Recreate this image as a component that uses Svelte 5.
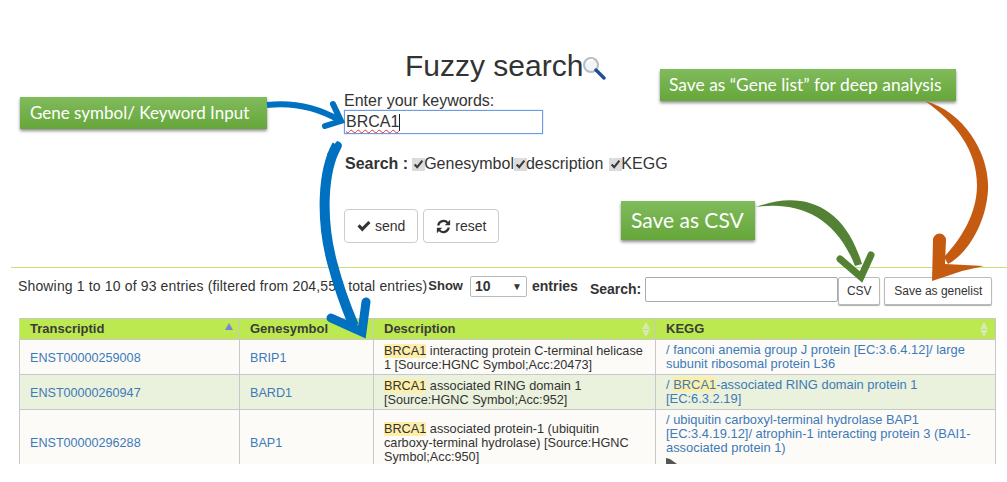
<script>
  const rows = [
    {
      id: 'ENST00000259008',
      gene: 'BRIP1',
      desc: ' interacting protein C-terminal helicase 1 [Source:HGNC Symbol;Acc:20473]',
      kegg: ['/ fanconi anemia group J protein [EC:3.6.4.12]/ large subunit ribosomal protein L36']
    },
    {
      id: 'ENST00000260947',
      gene: 'BARD1',
      desc: ' associated RING domain 1 [Source:HGNC Symbol;Acc:952]',
      kegg: ['/ ', 'BRCA1', '-associated RING domain protein 1 [EC:6.3.2.19]']
    },
    {
      id: 'ENST00000296288',
      gene: 'BAP1',
      desc: ' associated protein-1 (ubiquitin carboxy-terminal hydrolase) [Source:HGNC Symbol;Acc:950]',
      kegg: ['/ ubiquitin carboxyl-terminal hydrolase BAP1 [EC:3.4.19.12]/ atrophin-1 interacting protein 3 (BAI1-associated protein 1)'],
      more: true
    }
  ];
  const fields = ['Genesymbol', 'description', 'KEGG'];
</script>

<div class="page">
  <h1 class="title">Fuzzy search<svg class="glass" viewBox="0 0 24 24" width="24" height="24">
      <circle cx="9" cy="9" r="7" fill="#f2f5f7" stroke="#b4bdc2" stroke-width="2" />
      <path d="M5 7a5 5 0 0 1 6-3" fill="none" stroke="#fff" stroke-width="2" />
      <path d="M14 14l8 8" stroke="#1f4f96" stroke-width="3.4" stroke-linecap="round" />
    </svg></h1>

  <form class="form">
    <div class="kw-label">Enter your keywords:</div>
    <div class="kw-input"><span class="squiggle">BRCA1</span><span class="caret"></span></div>

    <div class="fields">
      <b>Search :</b>
      {#each fields as f}
        <label><input type="checkbox" checked />{f}</label>
      {/each}
    </div>

    <div class="actions">
      <button type="button" class="btn">
        <svg viewBox="0 0 14 12" width="14" height="12"><path d="M0.5 6.5l2.2-2.2 2.6 2.6 6-6 2.2 2.2-8.2 8.4z" fill="#333" /></svg>
        send
      </button>
      <button type="button" class="btn">
        <svg viewBox="0 0 14 14" width="15" height="15" fill="none" stroke="#333" stroke-width="2">
          <path d="M2 6a5.2 5.2 0 0 1 9-2.4" />
          <path d="M12 8a5.2 5.2 0 0 1-9 2.4" />
          <path d="M13.2 0.8v5h-5z" fill="#333" stroke="none" />
          <path d="M0.8 13.2v-5h5z" fill="#333" stroke="none" />
        </svg>
        reset
      </button>
    </div>
  </form>

  <div class="results">
    <div class="toolbar">
      <span class="info">Showing 1 to 10 of 93 entries (filtered from 204,555 total entries)</span>
      <b class="show">Show</b>
      <span class="select">10<i>▼</i></span>
      <b class="entries">entries</b>
      <b class="search-label">Search:</b>
      <input class="search" type="text" />
      <button type="button" class="tool-btn">CSV</button>
      <button type="button" class="tool-btn save">Save as genelist</button>
    </div>

    <table>
      <colgroup>
        <col style="width:220px" />
        <col style="width:134px" />
        <col style="width:282px" />
        <col />
      </colgroup>
      <thead>
        <tr>
          <th>Transcriptid<span class="sort-up"></span></th>
          <th>Genesymbol</th>
          <th>Description<span class="sort"></span></th>
          <th>KEGG<span class="sort"></span></th>
        </tr>
      </thead>
      <tbody>
        {#each rows as r, i}
          <tr class:alt={i % 2 == 1}>
            <td><a href="#top">{r.id}</a></td>
            <td><a href="#top">{r.gene}</a></td>
            <td class="desc"><mark>BRCA1</mark>{r.desc}</td>
            <td class="kegg">
              <a href="#top">
                {#each r.kegg as part}
                  {#if part == 'BRCA1'}<mark>{part}</mark>{:else}{part}{/if}
                {/each}
              </a>
              {#if r.more}
                <svg class="more" viewBox="0 0 12 13" width="12" height="13"><path d="M0 0l4 1 7 5v2H0z" fill="#555" /></svg>
              {/if}
            </td>
          </tr>
        {/each}
      </tbody>
    </table>
  </div>

  <!-- annotations drawn over the screenshot -->
  <div class="note note-input">Gene symbol/ Keyword Input</div>
  <div class="note note-list">Save as “Gene list” for deep analysis</div>
  <div class="note note-csv">Save as CSV</div>

  <svg class="arrows" viewBox="0 0 1007 464" width="1007" height="464">
    <g fill="none" stroke="#0070c0" stroke-linecap="round">
      <path d="M267 105C295 102 318 108 339 120" stroke-width="6" stroke-linecap="butt" />
      <path d="M333 104L341 121L325 126" stroke-width="6" />
      <path d="M337 145C322 172 321 220 332 262C338 285 345 305 354 326" stroke-width="10" stroke-linecap="butt" />
      <path d="M331 318L362 332L366 302" stroke-width="9" />
    </g>
    <path d="M337 141q5 1 5 5l-6 12-9-4z" fill="#0070c0" />

    <path d="M925 101C965 112 990 155 988 190C986 225 966 255 948 264L944 257C960 240 977 215 977 185C977 150 955 122 925 101Z" fill="#c55a11" />
    <path d="M932 281L933 240a6.500 6.500 0 0 1 13 0L945 264L984 266L962 271Z" fill="#c55a11" />

    <path d="M756 207C795 192 842 198 862 264L855 266C835 214 795 201 756 207Z" fill="#548235" />
    <path d="M840 259L861 277L871 255" fill="none" stroke="#548235" stroke-width="7" stroke-linecap="round" />
  </svg>
</div>

<style>
  :global(body) {
    margin: 0;
    background: #fff;
  }

  .page {
    position: relative;
    height: 464px;
    overflow: hidden;
    font-family: "Liberation Sans", Arial, sans-serif;
    color: #333;
  }

  .title {
    display: flex;
    align-items: flex-end;
    height: 85px;
    margin: 0;
    padding-left: 405px;
    box-sizing: border-box;
    font-size: 30px;
    font-weight: 400;
    line-height: 38px;
  }

  .glass {
    margin-left: -1px;
    margin-bottom: 5px;
  }

  .form {
    margin: 0 0 0 344px;
    padding-top: 6px;
  }

  .kw-label {
    font-size: 16px;
    line-height: 19px;
  }

  .kw-input {
    display: flex;
    align-items: center;
    box-sizing: border-box;
    width: 199px;
    height: 24px;
    border: 1px solid #6d9be6;
    box-shadow: 0 0 1px #7da7e8;
    font-size: 16px;
    padding-left: 1px;
  }

  .squiggle {
    text-decoration: underline wavy #e03030 1px;
    text-underline-offset: 2px;
  }

  .caret {
    width: 1px;
    height: 17px;
    background: #222;
  }

  .fields {
    display: flex;
    align-items: center;
    height: 20px;
    margin-top: 20px;
    padding-left: 1px;
    font-size: 16px;
  }

  .fields b {
    margin-right: 4px;
  }

  .fields label {
    display: flex;
    align-items: center;
  }

  .fields label:last-child {
    margin-left: 6px;
  }

  .fields input {
    width: 13px;
    height: 13px;
    margin: 0 -1px 0 0;
    accent-color: #dcdcdc;
  }

  .actions {
    display: flex;
    gap: 5px;
    margin-top: 35px;
  }

  .btn {
    display: flex;
    align-items: center;
    justify-content: center;
    gap: 4px;
    height: 34px;
    padding: 0 12px;
    background: #fff;
    border: 1px solid #ccc;
    border-radius: 4px;
    color: #333;
    font: 14px "Liberation Sans", Arial, sans-serif;
  }

  .results {
    margin: 24px 0 0 11px;
    border-top: 1px solid #c5e375;
  }

  .toolbar {
    display: flex;
    align-items: flex-start;
    height: 50px;
    padding-left: 7px;
    font-size: 14px;
    color: #333;
  }

  .info {
    margin-top: 10px;
    letter-spacing: 0.150px;
  }

  .show {
    margin: 10px 7px 0 1px;
    font-size: 13px;
  }

  .select {
    position: relative;
    box-sizing: border-box;
    width: 57px;
    height: 21px;
    margin-top: 8px;
    padding-left: 4px;
    border: 1px solid #bbb;
    border-radius: 2px;
    font-weight: 700;
    font-size: 14px;
    line-height: 19px;
  }

  .select i {
    position: absolute;
    right: 4px;
    top: 0;
    font-style: normal;
    font-size: 10px;
  }

  .entries {
    margin: 10px 0 0 5px;
    font-size: 14px;
  }

  .search-label {
    margin: 13px 4px 0 12px;
    font-size: 14px;
  }

  .search {
    box-sizing: border-box;
    width: 193px;
    height: 25px;
    margin: 9px 0 0;
    border: 1px solid #aaa;
    border-radius: 2px;
  }

  .tool-btn {
    box-sizing: border-box;
    height: 28px;
    width: 42px;
    margin-top: 9px;
    padding: 0;
    background: #fff;
    border: 1px solid #bbb;
    border-radius: 2px;
    box-shadow: 0 1px 1px #aaa;
    color: #333;
    font: 12px "Liberation Sans", Arial, sans-serif;
  }

  .save {
    width: 108px;
    margin-left: 4px;
  }

  table {
    width: 977px;
    margin-left: 8px;
    table-layout: fixed;
    border-collapse: collapse;
    font-size: 12.600px;
    line-height: 14px;
  }

  th {
    position: relative;
    height: 21px;
    padding: 0 10px;
    box-sizing: border-box;
    background: #bce950;
    border: 1px solid #c8c8c8;
    border-left-color: #cfe0a8;
    text-align: left;
    font-size: 13px;
    color: #3b3b3b;
  }

  td {
    padding: 4px 10px 2px;
    background: #fcfbf8;
    border: 1px solid #c8c8c8;
    vertical-align: middle;
  }

  .alt td {
    background: #eaf1dc;
  }

  .desc {
    font-size: 12.700px;
  }

  td.kegg {
    padding-top: 3px;
    padding-bottom: 3px;
    font-size: 12.900px;
  }

  a {
    color: #3d7ab8;
    text-decoration: none;
  }

  mark {
    background: #fdeea8;
    color: inherit;
  }

  .more {
    display: block;
    margin-top: 3px;
  }

  .sort-up,
  .sort {
    position: absolute;
    right: 5px;
    width: 0;
    border-left: 4px solid transparent;
    border-right: 4px solid transparent;
  }

  .sort-up {
    top: 4px;
    right: 6px;
    border-bottom: 7px solid #7f7fd8;
  }

  .sort {
    top: 3px;
    border-bottom: 7px solid #d8e6b8;
  }

  th:last-child .sort {
    right: 7px;
  }

  .sort::after {
    content: "";
    position: absolute;
    left: -4px;
    top: 8px;
    border-left: 4px solid transparent;
    border-right: 4px solid transparent;
    border-top: 7px solid #d8e6b8;
  }

  .note {
    position: absolute;
    display: flex;
    align-items: center;
    box-sizing: border-box;
    padding: 0 0 2px 10px;
    color: #fff;
    background: linear-gradient(#80bb5c, #66a63a);
    box-shadow: 0 2px 3px rgba(0, 0, 0, 0.45);
    font-family: Lato, sans-serif;
    font-size: 17px;
    white-space: nowrap;
  }

  .note-input {
    left: 20px;
    top: 97px;
    width: 247px;
    height: 32px;
  }

  .note-list {
    left: 660px;
    top: 69px;
    width: 296px;
    height: 32px;
    padding-left: 9px;
    font-size: 17.400px;
  }

  .note-csv {
    left: 621px;
    top: 201px;
    width: 134px;
    height: 39px;
    font-size: 21px;
  }

  .arrows {
    position: absolute;
    left: 0;
    top: 0;
    pointer-events: none;
  }
</style>
